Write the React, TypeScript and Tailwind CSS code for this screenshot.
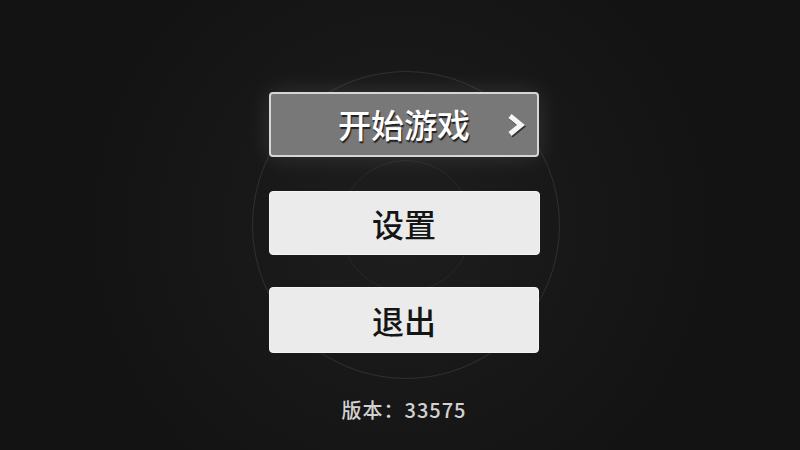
export default function App() {
  const font = { fontFamily: '"Noto Sans CJK SC", "Noto Sans", sans-serif' };
  return (
    <main
      className="relative h-[450px] w-full overflow-hidden bg-[radial-gradient(circle_at_50%_50%,#1e1e1e_0%,#181818_35%,#131313_70%)]"
      style={font}
    >
      {/* decorative rings */}
      <div className="pointer-events-none absolute left-[252px] top-[71px] h-[308px] w-[308px] rounded-full border border-white/10" />
      <div className="pointer-events-none absolute left-[340px] top-[160px] h-[132px] w-[132px] rounded-full border border-white/[0.05]" />

      <div className="relative flex flex-col items-center pl-[8px] pt-[92px]">
        <button className="relative flex h-[65px] w-[270px] items-center justify-center rounded-[4px] border-2 border-[#d6d6d6] bg-[#787878] shadow-[0_0_24px_rgba(255,255,255,0.12)]">
          <span className="text-[33px] font-medium leading-none text-white [text-shadow:1px_2px_1px_rgba(0,0,0,0.75)]">
            开始游戏
          </span>
          <svg
            className="absolute right-[10px] top-1/2 -translate-y-1/2"
            width="22"
            height="26"
            viewBox="0 0 22 26"
          >
            <path d="M5 4 L16 13 L5 22" fill="none" stroke="rgba(0,0,0,0.6)" strokeWidth="5" strokeLinejoin="miter" transform="translate(1,1.5)" />
            <path d="M5 4 L16 13 L5 22" fill="none" stroke="#f5f5f5" strokeWidth="5" strokeLinejoin="miter" />
          </svg>
        </button>

        <button className="mt-[34px] flex h-[64px] w-[271px] items-center justify-center rounded-[4px] border border-[#f4f4f4] bg-[#ebebeb]">
          <span className="text-[32px] font-medium leading-none text-[#151515]">设置</span>
        </button>

        <button className="mt-[32px] flex h-[66px] w-[270px] items-center justify-center rounded-[4px] border border-[#f4f4f4] bg-[#ebebeb]">
          <span className="text-[32px] font-medium leading-none text-[#151515]">退出</span>
        </button>

        <p className="mt-[45px] text-[20px] font-medium leading-6 tracking-wider text-[#d2d2d2]">
          版本：33575
        </p>
      </div>
    </main>
  );
}
